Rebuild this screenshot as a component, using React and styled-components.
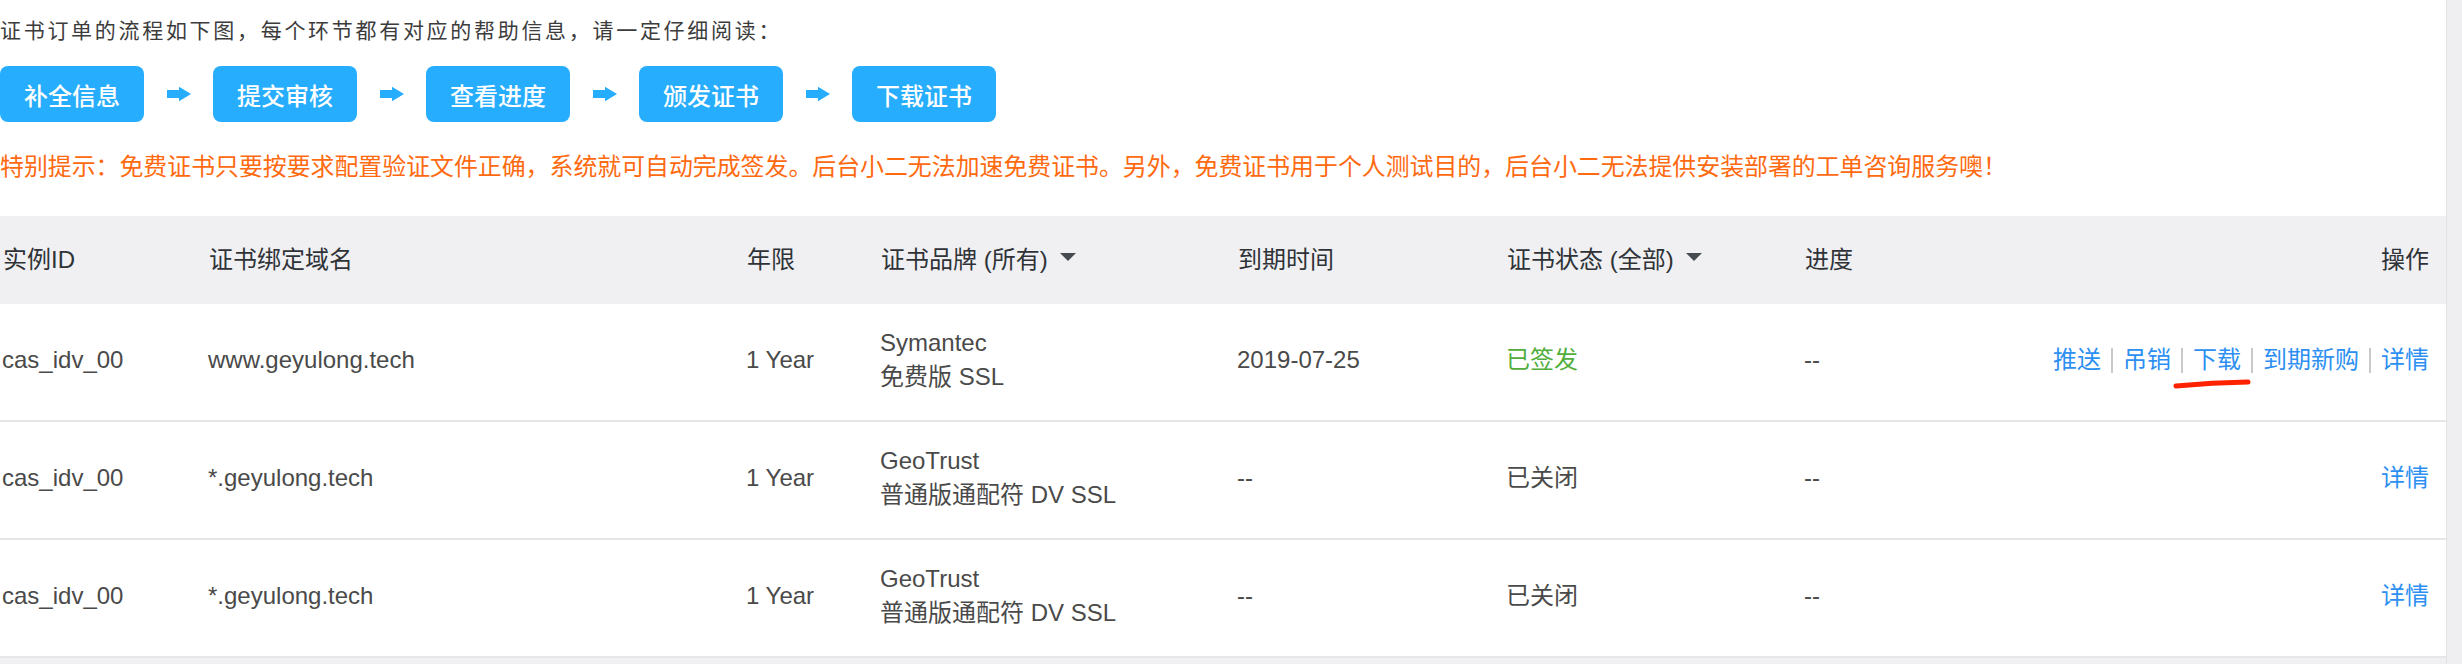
import React from 'react';
import styled, { createGlobalStyle } from 'styled-components';

const GlobalStyle = createGlobalStyle`
  html, body {
    margin: 0;
    padding: 0;
    background: #f0f0f2;
  }
  body {
    font-family: "Liberation Sans", "Noto Sans CJK SC", sans-serif;
  }
`;

const Page = styled.div`
  display: flex;
  width: 2462px;
  height: 664px;
  overflow: hidden;
`;

const Main = styled.div`
  flex: 1;
  display: flex;
  flex-direction: column;
  background: #f0f0f2;
`;

const Gutter = styled.div`
  width: 15px;
  background: #efeff1;
  border-left: 1px solid #e2e2e5;
`;

const Intro = styled.div`
  background: #fff;
  padding: 14px 0 34px 0;
`;

const Heading = styled.p`
  margin: 0;
  font-family: "Noto Sans CJK SC", sans-serif;
  font-size: 21px;
  letter-spacing: 2.7px;
  line-height: 30px;
  color: #3c3c3c;
  white-space: nowrap;
`;

const Flow = styled.div`
  display: flex;
  align-items: center;
  gap: 22.5px;
  margin: 22px 0 30px 0;
`;

const Step = styled.div`
  width: 144px;
  height: 56px;
  display: flex;
  align-items: center;
  justify-content: center;
  border-radius: 8px;
  background: #27adfd;
  color: #fff;
  font-size: 24px;
  font-weight: 500;
`;

const Warning = styled.p`
  margin: 0;
  font-size: 23.9px;
  line-height: 30px;
  color: #ff6a10;
  white-space: nowrap;
`;

const cols = '206px 538px 134px 357px 269px 298px 1fr';

const HeadRow = styled.div`
  display: grid;
  grid-template-columns: ${cols};
  align-items: center;
  height: 82px;
  padding: 0 17px 6px 3px;
  background: #f0f0f3;
  color: #2f3337;
  font-size: 24px;
`;

const Row = styled.div`
  display: grid;
  grid-template-columns: ${cols};
  align-items: center;
  height: 112px;
  padding: 0 17px 4px 2px;
  background: #fff;
  border-bottom: 2px solid #e6e6e8;
  color: #4a4a4a;
  font-size: 24px;
  line-height: 34px;
`;

const Cell = styled.div`
  white-space: nowrap;
  color: ${(props) => props.color || 'inherit'};
`;

const Filter = styled.span`
  display: inline-flex;
  align-items: center;
  gap: 12px;
`;

const Caret = styled.span`
  width: 0;
  height: 0;
  border-left: 8px solid transparent;
  border-right: 8px solid transparent;
  border-top: 8px solid #464b50;
`;

const Split = styled.div`
  display: flex;
  justify-content: space-between;
  align-items: center;
`;

const Actions = styled.div`
  display: flex;
  align-items: center;
`;

const Link = styled.span`
  position: relative;
  display: inline-block;
  color: #2d8ff2;
  line-height: 34px;
`;

const Sep = styled.span`
  width: 2px;
  height: 25px;
  margin: 0 10px 0 10px;
  background: #c9c9cb;
`;

const Scribble = styled.svg`
  position: absolute;
  left: -20px;
  top: 36px;
  overflow: visible;
`;

const FlowArrow = () => (
  <svg width="24" height="16" viewBox="0 0 24 16">
    <rect x="0" y="4" width="12.5" height="8" fill="#27adfd" />
    <polygon points="12,0.8 24,8 12,15.2" fill="#27adfd" />
  </svg>
);

const steps = ['补全信息', '提交审核', '查看进度', '颁发证书', '下载证书'];

const rows = [
  {
    id: 'cas_idv_00',
    domain: 'www.geyulong.tech',
    brand: 'Symantec',
    kind: '免费版 SSL',
    expires: '2019-07-25',
    status: '已签发',
    statusColor: '#52ae3c',
    actions: ['推送', '吊销', '下载', '到期新购', '详情'],
  },
  {
    id: 'cas_idv_00',
    domain: '*.geyulong.tech',
    brand: 'GeoTrust',
    kind: '普通版通配符 DV SSL',
    expires: '--',
    status: '已关闭',
    actions: ['详情'],
  },
  {
    id: 'cas_idv_00',
    domain: '*.geyulong.tech',
    brand: 'GeoTrust',
    kind: '普通版通配符 DV SSL',
    expires: '--',
    status: '已关闭',
    actions: ['详情'],
  },
];

const App = () => {
  return (
    <Page>
      <GlobalStyle />
      <Main>
        <Intro>
          <Heading>证书订单的流程如下图，每个环节都有对应的帮助信息，请一定仔细阅读：</Heading>
          <Flow>
            {steps.map((s, i) => (
              <React.Fragment key={s}>
                {i > 0 && <FlowArrow />}
                <Step>{s}</Step>
              </React.Fragment>
            ))}
          </Flow>
          <Warning>
            特别提示：免费证书只要按要求配置验证文件正确，系统就可自动完成签发。后台小二无法加速免费证书。另外，免费证书用于个人测试目的，后台小二无法提供安装部署的工单咨询服务噢！
          </Warning>
        </Intro>

        <HeadRow>
          <Cell>实例ID</Cell>
          <Cell>证书绑定域名</Cell>
          <Cell>年限</Cell>
          <Cell>
            <Filter>
              证书品牌 (所有)
              <Caret />
            </Filter>
          </Cell>
          <Cell>到期时间</Cell>
          <Cell>
            <Filter>
              证书状态 (全部)
              <Caret />
            </Filter>
          </Cell>
          <Cell>
            <Split>
              <span>进度</span>
              <span>操作</span>
            </Split>
          </Cell>
        </HeadRow>

        {rows.map((r, idx) => (
          <Row key={idx}>
            <Cell>{r.id}</Cell>
            <Cell>{r.domain}</Cell>
            <Cell>1 Year</Cell>
            <Cell>
              {r.brand}
              <br />
              {r.kind}
            </Cell>
            <Cell>{r.expires}</Cell>
            <Cell color={r.statusColor}>{r.status}</Cell>
            <Cell>
              <Split>
                <span>--</span>
                <Actions>
                  {r.actions.map((a, i) => (
                    <React.Fragment key={a}>
                      {i > 0 && <Sep />}
                      <Link>
                        {a}
                        {a === '下载' && (
                          <Scribble width="78" height="10" viewBox="0 0 78 10">
                            <path
                              d="M3 7 C 25 5, 50 3.5, 75 3"
                              stroke="#ff2200"
                              strokeWidth="5"
                              strokeLinecap="round"
                              fill="none"
                            />
                          </Scribble>
                        )}
                      </Link>
                    </React.Fragment>
                  ))}
                </Actions>
              </Split>
            </Cell>
          </Row>
        ))}
      </Main>
      <Gutter />
    </Page>
  );
};

export default App;
